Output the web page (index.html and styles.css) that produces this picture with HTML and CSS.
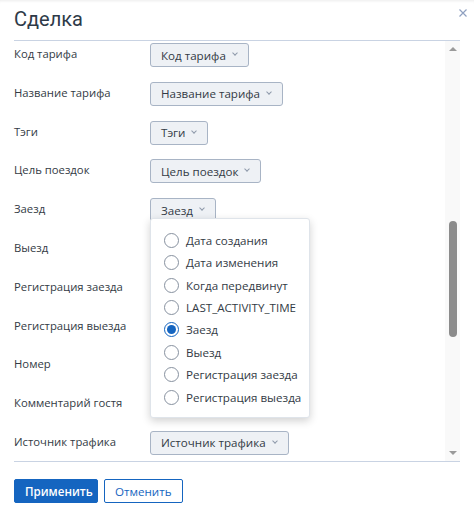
FILE: index.html
```html
<!DOCTYPE html>
<html lang="ru">
  <head>
    <meta charset="UTF-8" />
    <title>Сделка</title>
    <link rel="stylesheet" href="styles.css">
  </head>
  <body>
    <div class="dialog">
      <div class="head">
        <h1>Сделка</h1>
        <svg class="close" width="8" height="8" viewBox="0 0 8 8">
          <path d="M0.5 0.5L7.5 7.5M7.5 0.5L0.5 7.5" />
        </svg>
      </div>

      <div class="body">
        <div class="fields">
          <div class="row">
            <label>Код тарифа</label>
            <button class="select">Код тарифа <i class="chev"></i></button>
          </div>
          <div class="row">
            <label>Название тарифа</label>
            <button class="select">Название тарифа <i class="chev"></i></button>
          </div>
          <div class="row">
            <label>Тэги</label>
            <button class="select">Тэги <i class="chev"></i></button>
          </div>
          <div class="row">
            <label>Цель поездок</label>
            <button class="select">Цель поездок <i class="chev"></i></button>
          </div>
          <div class="row">
            <label>Заезд</label>
            <div class="dropdown">
              <button class="select open">Заезд <i class="chev"></i></button>
              <ul class="menu">
                <li><span class="radio"></span>Дата создания</li>
                <li><span class="radio"></span>Дата изменения</li>
                <li><span class="radio"></span>Когда передвинут</li>
                <li><span class="radio"></span>LAST_ACTIVITY_TIME</li>
                <li><span class="radio checked"></span>Заезд</li>
                <li><span class="radio"></span>Выезд</li>
                <li><span class="radio"></span>Регистрация заезда</li>
                <li><span class="radio"></span>Регистрация выезда</li>
              </ul>
            </div>
          </div>
          <div class="row"><label>Выезд</label></div>
          <div class="row"><label>Регистрация заезда</label></div>
          <div class="row"><label>Регистрация выезда</label></div>
          <div class="row"><label>Номер</label></div>
          <div class="row"><label>Комментарий гостя</label></div>
          <div class="row">
            <label>Источник трафика</label>
            <button class="select">Источник трафика <i class="chev"></i></button>
          </div>
        </div>

        <div class="scrollbar">
          <span class="arrow up"></span>
          <span class="thumb"></span>
          <span class="arrow down"></span>
        </div>
      </div>

      <div class="actions">
        <button class="btn primary">Применить</button>
        <button class="btn">Отменить</button>
      </div>
    </div>
  </body>
</html>
```

FILE: styles.css
```css
* {
  box-sizing: border-box;
  margin: 0;
  padding: 0;
}
body {
  font-family: "Open Sans", sans-serif;
  font-size: 11.3px;
  color: #333b45;
  background-color: #fff;
}
.dialog {
  height: 518px;
  padding: 0 7px 0 14px;
  box-shadow: inset 0 3px 3px -2px rgba(0, 0, 0, 0.08);
}
.head {
  height: 40px;
  display: flex;
  justify-content: space-between;
  align-items: flex-start;
}
.head h1 {
  font-family: Roboto, sans-serif;
  font-weight: 400;
  font-size: 20px;
  line-height: 20px;
  padding-top: 9px;
  color: #2e3a48;
}
.close {
  margin-top: 9px;
  stroke: #8fa0c0;
  stroke-width: 1.2;
}

/* scroll area with the field list */
.body {
  width: 446px;
  height: 422px;
  display: flex;
  border-top: 1px solid #c9d3e3;
  border-bottom: 1px solid #c9d3e3;
}
.fields {
  flex: 1;
  padding-top: 2px;
}
.row {
  height: 38.8px;
  display: flex;
  align-items: flex-start;
}
.row label {
  width: 136px;
  padding-top: 3px;
  line-height: 16px;
}
.select {
  height: 24px;
  display: flex;
  align-items: center;
  gap: 7px;
  padding: 0 11px 0 10px;
  font-family: "Open Sans", sans-serif;
  font-size: 11.6px;
  color: #333b45;
  background-color: #eef1f5;
  border: 1px solid #a8b4c5;
  border-radius: 3px;
}
.chev {
  width: 4px;
  height: 4px;
  border-right: 1px solid #8e99aa;
  border-bottom: 1px solid #8e99aa;
  transform: translateY(-2px) rotate(45deg);
}

.dropdown {
  position: relative;
}
.menu {
  position: absolute;
  top: 20px;
  left: 0;
  width: 160px;
  height: 200px;
  list-style: none;
  padding-top: 10px;
  background-color: #fff;
  border: 1px solid #dfe4ea;
  border-radius: 3px;
  box-shadow: 0 3px 9px rgba(0, 0, 0, 0.18);
  z-index: 10;
}
.menu li {
  height: 22.4px;
  display: flex;
  align-items: center;
  gap: 7px;
  padding-left: 13px;
  font-size: 11.6px;
  color: #333b45;
}
.radio {
  width: 15px;
  height: 15px;
  border: 1px solid #87919f;
  border-radius: 50%;
  display: flex;
  align-items: center;
  justify-content: center;
}
.radio.checked {
  border-color: #1565c0;
}
.radio.checked::after {
  content: "";
  width: 9px;
  height: 9px;
  border-radius: 50%;
  background-color: #1565c0;
}

.scrollbar {
  width: 15px;
  background-color: #f9f9f9;
  display: flex;
  flex-direction: column;
  align-items: center;
  padding: 6px 0 6px;
}
.arrow {
  width: 0;
  height: 0;
  border-left: 4px solid transparent;
  border-right: 4px solid transparent;
}
.arrow.up {
  border-bottom: 4px solid #9a9a9a;
}
.arrow.down {
  border-top: 4px solid #9a9a9a;
  margin-top: auto;
}
.thumb {
  width: 8px;
  height: 116px;
  margin-top: 170px;
  border-radius: 4px;
  background-color: #8c8c8c;
}

.actions {
  display: flex;
  gap: 6px;
  padding-top: 17px;
}
.btn {
  height: 24px;
  padding: 0 10px;
  font-family: "Open Sans", sans-serif;
  font-size: 11.6px;
  color: #1565c0;
  background-color: #fff;
  border: 1px solid #1565c0;
  border-radius: 2px;
}
.btn.primary {
  width: 84px;
  font-weight: 600;
  color: #fff;
  background-color: #1565c0;
}
```
